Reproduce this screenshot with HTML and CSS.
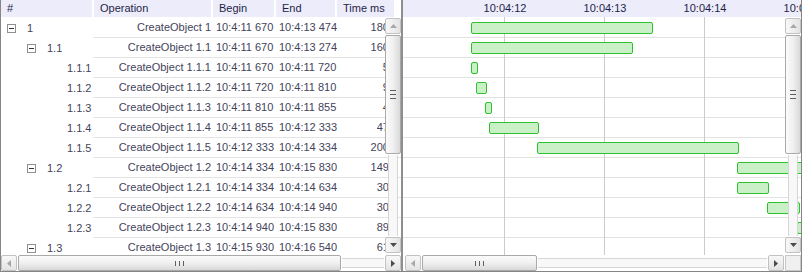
FILE: index.html
```html
<!DOCTYPE html>
<html lang="en">
<head>
    <meta charset="UTF-8">
    <meta name="viewport" content="width=device-width, initial-scale=1.0">
    <title>Operations Gantt</title>
    <link rel="stylesheet" href="styles.css">
</head>
<body>
    <div class="gantt-frame">
        <div class="tree-panel">
            <div class="tree-header">
                <div class="head-cell">#</div>
                <div class="head-cell">Operation</div>
                <div class="head-cell">Begin</div>
                <div class="head-cell">End</div>
                <div class="head-cell">Time ms</div>
            </div>
            <div id="treeBody" class="tree-body"></div>

            <div class="vscroll">
                <div class="sb-btn sb-btn-v"><svg class="arrow-off" width="7" height="4" viewBox="0 0 7 4"><path d="M0 4h7L3.5 0z"/></svg></div>
                <div class="thumb-v"><svg class="grip" width="6" height="9" viewBox="0 0 6 9"><rect y="0" width="6" height="1"/><rect y="4" width="6" height="1"/><rect y="8" width="6" height="1"/></svg></div>
                <div class="track-v"></div>
                <div class="sb-btn sb-btn-v"><svg class="arrow-on" width="7" height="4" viewBox="0 0 7 4"><path d="M0 0h7L3.5 4z"/></svg></div>
            </div>
            <div class="hscroll">
                <div class="sb-btn sb-btn-h"><svg class="arrow-off" width="4" height="7" viewBox="0 0 4 7"><path d="M4 0v7L0 3.5z"/></svg></div>
                <div class="thumb-h thumb-tree"><svg class="grip" width="9" height="5" viewBox="0 0 9 5"><rect x="0" width="1" height="5"/><rect x="4" width="1" height="5"/><rect x="8" width="1" height="5"/></svg></div>
                <div class="track-h"></div>
                <div class="sb-btn sb-btn-h"><svg class="arrow-on" width="4" height="7" viewBox="0 0 4 7"><path d="M0 0v7L4 3.5z"/></svg></div>
            </div>
        </div>

        <div class="splitter"></div>

        <div class="chart-panel">
            <div id="chartHeader" class="chart-header"></div>
            <div id="chartBody" class="chart-body"></div>

            <div class="vscroll">
                <div class="sb-btn sb-btn-v"><svg class="arrow-off" width="7" height="4" viewBox="0 0 7 4"><path d="M0 4h7L3.5 0z"/></svg></div>
                <div class="thumb-v"><svg class="grip" width="6" height="9" viewBox="0 0 6 9"><rect y="0" width="6" height="1"/><rect y="4" width="6" height="1"/><rect y="8" width="6" height="1"/></svg></div>
                <div class="track-v"></div>
                <div class="sb-btn sb-btn-v"><svg class="arrow-on" width="7" height="4" viewBox="0 0 7 4"><path d="M0 0h7L3.5 4z"/></svg></div>
            </div>
            <div class="hscroll chart-hscroll">
                <div class="sb-btn sb-btn-h"><svg class="arrow-off" width="4" height="7" viewBox="0 0 4 7"><path d="M4 0v7L0 3.5z"/></svg></div>
                <div class="thumb-h thumb-chart"><svg class="grip" width="9" height="5" viewBox="0 0 9 5"><rect x="0" width="1" height="5"/><rect x="4" width="1" height="5"/><rect x="8" width="1" height="5"/></svg></div>
                <div class="track-h"></div>
                <div class="sb-btn sb-btn-h"><svg class="arrow-on" width="4" height="7" viewBox="0 0 4 7"><path d="M0 0v7L4 3.5z"/></svg></div>
                <div class="sb-corner"></div>
            </div>
        </div>
    </div>

    <script>
        // level, number, has children, begin ms, end ms (seconds of 10:04)
        const operations = [
            [0, "1", true, 11670, 13474],
            [1, "1.1", true, 11670, 13274],
            [2, "1.1.1", false, 11670, 11720],
            [2, "1.1.2", false, 11720, 11810],
            [2, "1.1.3", false, 11810, 11855],
            [2, "1.1.4", false, 11855, 12333],
            [2, "1.1.5", false, 12333, 14334],
            [1, "1.2", true, 14334, 15830],
            [2, "1.2.1", false, 14334, 14634],
            [2, "1.2.2", false, 14634, 14940],
            [2, "1.2.3", false, 14940, 15830],
            [1, "1.3", true, 15930, 16540]
        ];

        const pxPerSecond = 100;
        const axisStart = 12;   // first tick 10:04:12
        const axisOffset = 101; // x of first tick in chart

        function formatTime(ms) {
            const sec = Math.floor(ms / 1000);
            const rest = String(ms % 1000).padStart(3, "0");
            return `10:4:${sec} ${rest}`;
        }

        const treeBody = document.getElementById("treeBody");
        const chartBody = document.getElementById("chartBody");
        const chartHeader = document.getElementById("chartHeader");

        operations.forEach(([level, num, hasChildren, begin, end]) => {
            const row = document.createElement("div");
            row.className = "tree-row";
            row.innerHTML = `
                <div class="tree-cell level-${level}">
                    <span class="toggle">${hasChildren ? '<span class="toggle-box"></span>' : ''}</span>${num}
                </div>
                <div class="cell cell-op">CreateObject ${num}</div>
                <div class="cell cell-time">${formatTime(begin)}</div>
                <div class="cell cell-time">${formatTime(end)}</div>
                <div class="cell cell-ms">${end - begin}</div>`;
            treeBody.appendChild(row);

            const chartRow = document.createElement("div");
            chartRow.className = "chart-row";
            const left = Math.round(axisOffset - 0.5 + (begin / 1000 - axisStart) * pxPerSecond);
            const width = Math.round((end - begin) / 1000 * pxPerSecond) + 2;
            chartRow.innerHTML = `<div class="bar" style="left:${left}px;width:${width}px"></div>`;
            chartBody.appendChild(chartRow);
        });

        for (let i = 0; i < 4; i++) {
            const x = axisOffset + i * pxPerSecond;
            const label = document.createElement("div");
            label.className = "tick-label";
            label.style.left = x + "px";
            label.textContent = `10:04:${axisStart + i}`;
            chartHeader.appendChild(label);

            const line = document.createElement("div");
            line.className = "tick-line";
            line.style.left = x + "px";
            chartBody.appendChild(line);
        }
    </script>
</body>
</html>
```

FILE: styles.css
```css
body {
    margin: 0;
    font-family: "Liberation Sans", Arial, sans-serif;
    font-size: 11px;
    color: #43435a;
    background-color: #ffffff;
}

.gantt-frame {
    display: flex;
    width: 802px;
    height: 272px;
    box-sizing: border-box;
    border: 1px solid #858585;
    border-top: none;
}

.tree-panel {
    position: relative;
    width: 400px;
    overflow: hidden;
}

.splitter {
    width: 2px;
    background-color: #8e8e8e;
}

.chart-panel {
    position: relative;
    flex: 1;
    overflow: hidden;
}

/* headers */
.tree-header {
    display: grid;
    grid-template-columns: 93px 119px 63px 61px 59px;
    height: 17px;
}

.head-cell {
    background-color: #ececfb;
    border-right: 2px solid #ffffff;
    padding-left: 6px;
    line-height: 17px;
    color: #1f1f48;
    white-space: nowrap;
    overflow: hidden;
}

.chart-header {
    position: relative;
    height: 17px;
    background-color: #ececfb;
}

.tick-label {
    position: absolute;
    top: 0;
    line-height: 17px;
    color: #1f1f48;
    transform: translateX(-50%);
    margin-left: 1px;
    white-space: nowrap;
}

/* tree grid */
.tree-body {
    padding-top: 1px;
}

.tree-row {
    display: grid;
    grid-template-columns: 92px 120px 63px 61px 1fr;
    height: 20px;
}

.tree-cell {
    display: flex;
    align-items: center;
    padding-left: 6px;
    white-space: nowrap;
}

.tree-cell.level-1 {
    padding-left: 26px;
}

.tree-cell.level-2 {
    padding-left: 46px;
}

.toggle {
    width: 20px;
    height: 20px;
    display: flex;
    align-items: center;
    flex: none;
}

.toggle-box {
    position: relative;
    width: 9px;
    height: 9px;
    box-sizing: border-box;
    border: 1px solid #8f8f8f;
    background-color: #ffffff;
}

.toggle-box::after {
    content: "";
    position: absolute;
    left: 1px;
    top: 3px;
    width: 5px;
    height: 1px;
    background-color: #333333;
}

.cell {
    box-sizing: border-box;
    border-bottom: 1px solid #e3e3e3;
    line-height: 19px;
    white-space: nowrap;
    overflow: hidden;
}

.cell-op {
    text-align: right;
    padding-right: 2px;
}

.cell-time {
    padding-left: 3px;
}

.cell-ms {
    text-align: right;
    padding-right: 6px;
}

/* chart */
.chart-body {
    position: relative;
    padding-top: 1px;
}

.chart-row {
    position: relative;
    height: 20px;
    box-sizing: border-box;
    border-bottom: 1px solid #e3e3e3;
}

.tick-line {
    position: absolute;
    top: 0;
    bottom: 0;
    width: 1px;
    background-color: #cbcbcb;
}

.bar {
    position: absolute;
    top: 4px;
    height: 12px;
    box-sizing: border-box;
    border: 1px solid #2fc12f;
    border-radius: 2px;
    background-color: #c9f0c6;
    z-index: 1;
}

/* scrollbars */
.vscroll {
    position: absolute;
    top: 18px;
    bottom: 18px;
    right: 0;
    width: 16px;
    display: flex;
    flex-direction: column;
    gap: 1px;
    z-index: 2;
}

.hscroll {
    position: absolute;
    left: 0;
    right: 0;
    bottom: 0;
    height: 16px;
    display: flex;
    gap: 1px;
    background-color: #ffffff;
    z-index: 2;
}

.chart-hscroll {
    padding-left: 2px;
}

.sb-btn {
    flex: none;
    display: flex;
    align-items: center;
    justify-content: center;
    box-sizing: border-box;
    border: 1px solid #c2c2c2;
    border-radius: 2px;
}

.sb-btn-v {
    height: 16px;
    background: linear-gradient(to right, #f8f8f8, #e3e3e3);
}

.sb-btn-h {
    width: 16px;
    background: linear-gradient(to bottom, #f8f8f8, #e3e3e3);
}

.arrow-off {
    fill: #a8a8a8;
}

.arrow-on {
    fill: #4c4c4c;
}

.grip {
    fill: #5e5e5e;
}

.thumb-v {
    flex: none;
    height: 119px;
    display: flex;
    align-items: center;
    justify-content: center;
    box-sizing: border-box;
    border: 1px solid #a9a9a9;
    border-radius: 2px;
    background: linear-gradient(to right, #fbfbfb, #f0f0f0 50%, #d9d9d9);
}

.track-v {
    flex: 1;
    width: 10px;
    margin-left: 3px;
    box-sizing: border-box;
    border-left: 1px solid #d6d6d6;
    border-right: 1px solid #d6d6d6;
    background-color: #f8f8f8;
}

.thumb-h {
    flex: none;
    display: flex;
    align-items: center;
    justify-content: center;
    box-sizing: border-box;
    border: 1px solid #a9a9a9;
    border-radius: 2px;
    background: linear-gradient(to bottom, #fbfbfb, #f0f0f0 50%, #d9d9d9);
}

.thumb-tree {
    width: 323px;
}

.thumb-chart {
    width: 115px;
}

.track-h {
    flex: 1;
    height: 10px;
    align-self: center;
    box-sizing: border-box;
    border-top: 1px solid #d6d6d6;
    border-bottom: 1px solid #d6d6d6;
    background-color: #f8f8f8;
}

.sb-corner {
    flex: none;
    width: 16px;
    box-sizing: border-box;
    border: 1px solid #c8c8c8;
    background-color: #f0f0f0;
}
```
